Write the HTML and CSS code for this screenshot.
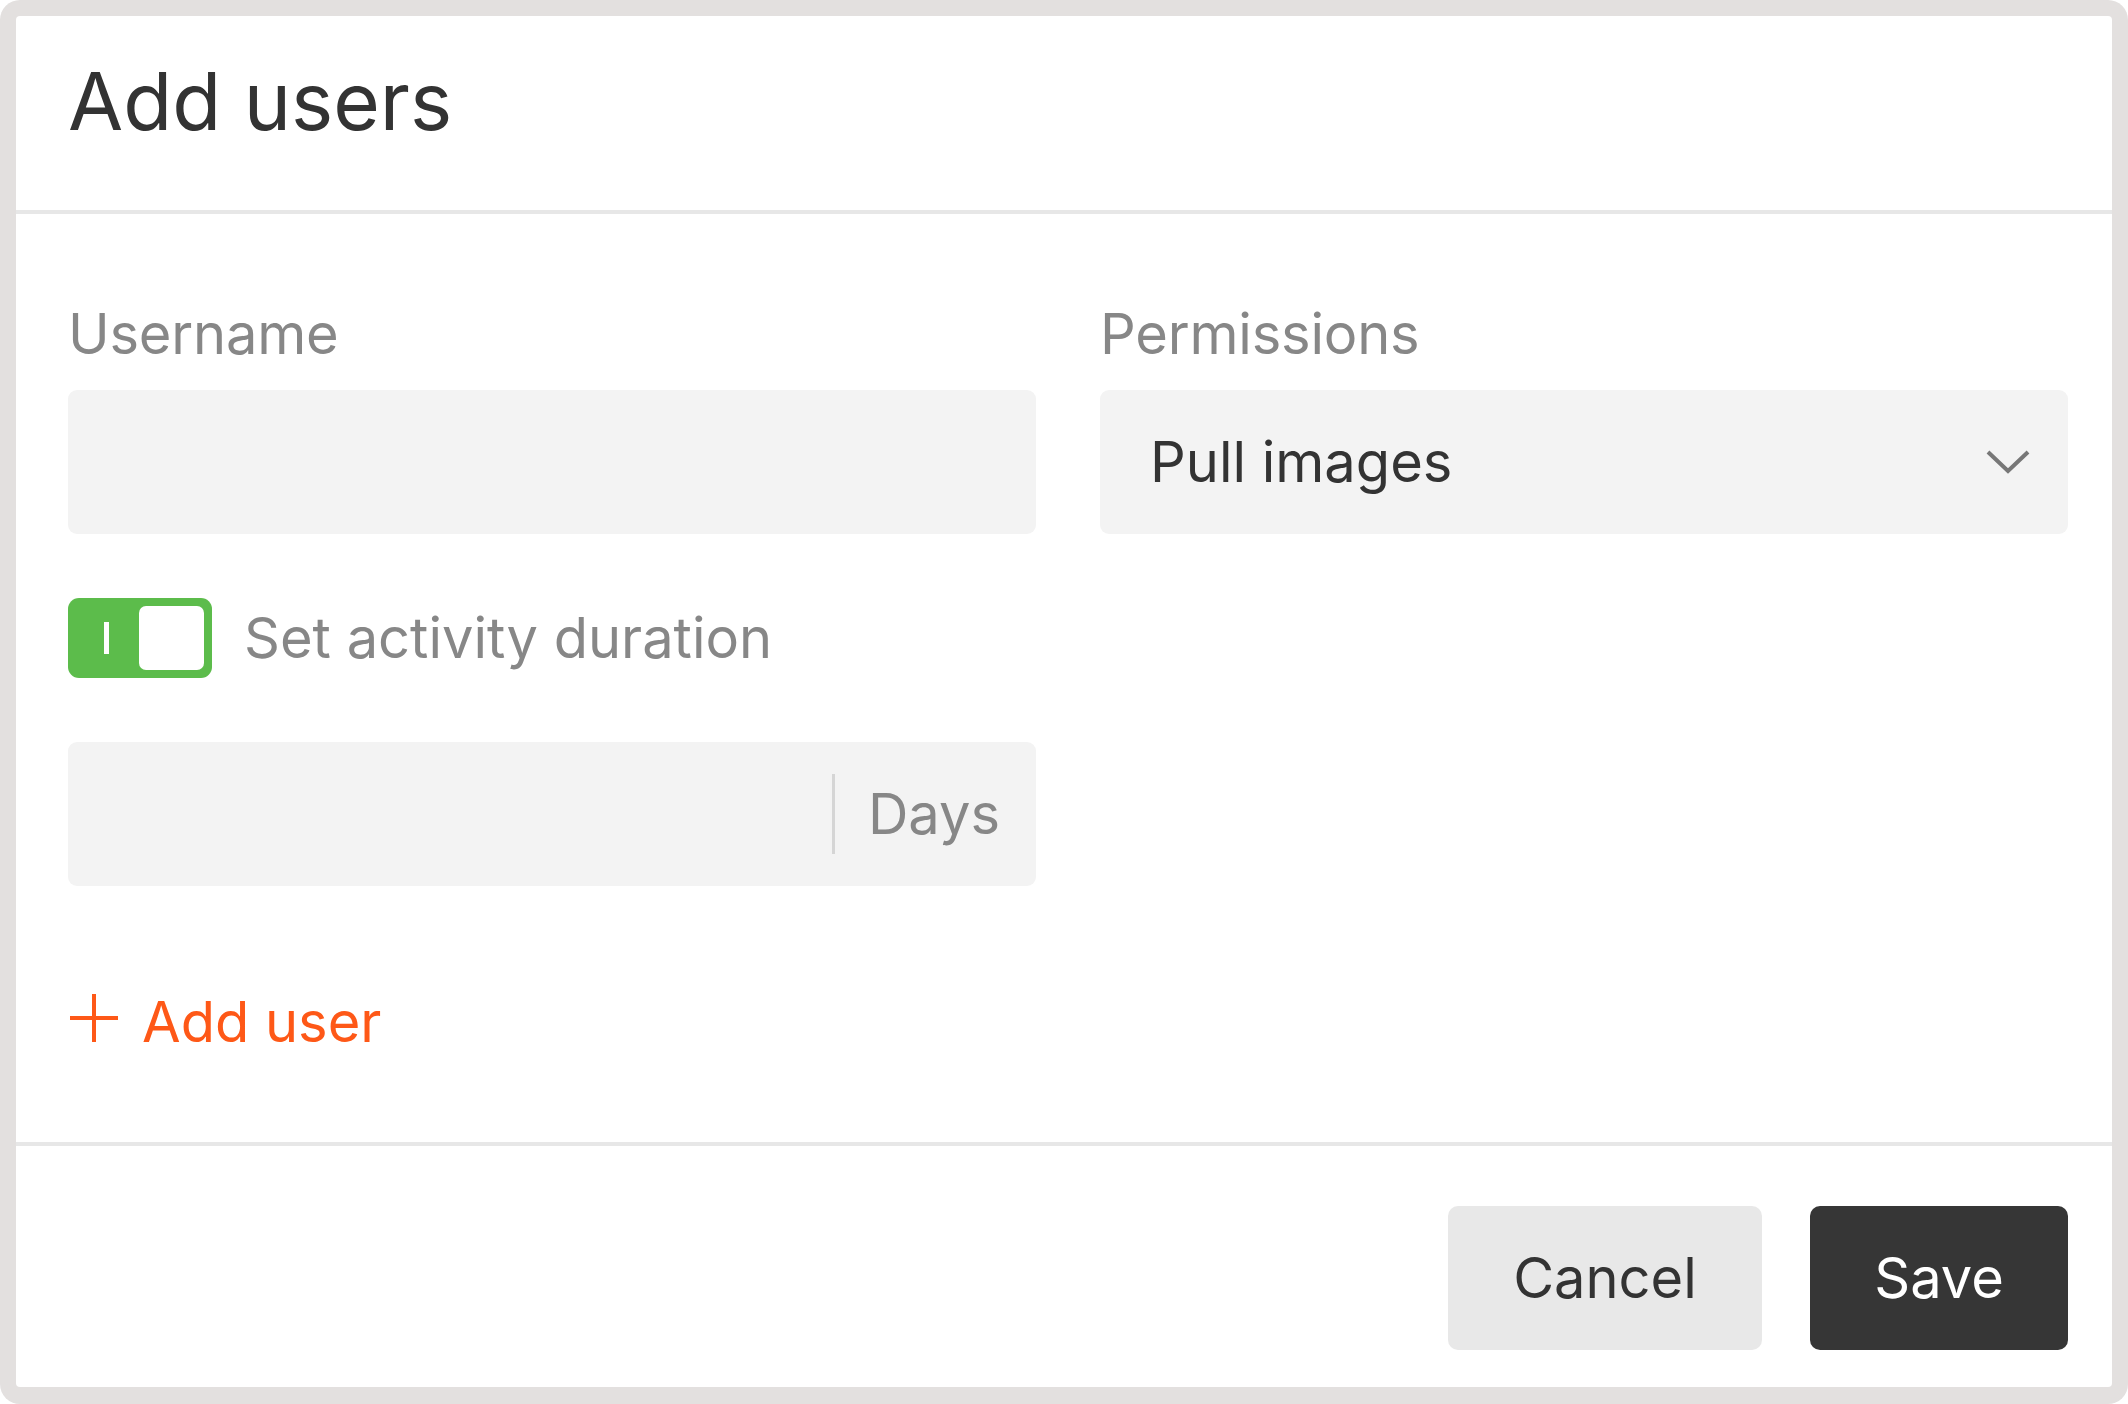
FILE: index.html
```html
<!DOCTYPE html>
<html lang="en">
<head>
<meta charset="utf-8">
<title>Add users</title>
<link rel="stylesheet" href="styles.css">
</head>
<body>
<div class="frame">
  <div class="modal">
    <header class="modal-header">
      <h1 class="title">Add users</h1>
    </header>
    <div class="modal-body">
      <div class="grid">
        <div class="field">
          <label class="label">Username</label>
          <div class="input"></div>
        </div>
        <div class="field">
          <label class="label">Permissions</label>
          <div class="input select">
            <span class="select-value">Pull images</span>
            <svg class="chevron" width="44" height="24" viewBox="0 0 44 24"><polyline points="2,2 22,21 42,2" fill="none" stroke="#777" stroke-width="4"/></svg>
          </div>
        </div>
      </div>
      <div class="toggle-row">
        <span class="toggle"><span class="toggle-mark"></span><span class="knob"></span></span>
        <span class="toggle-label">Set activity duration</span>
      </div>
      <div class="grid">
        <div class="input days">
          <span class="sep"></span>
          <span class="unit">Days</span>
        </div>
      </div>
      <button class="add-user">
        <svg class="plus" width="48" height="48" viewBox="0 0 48 48"><path d="M24 0V48M0 24H48" stroke="#fe5817" stroke-width="4" fill="none"/></svg>
        <span>Add user</span>
      </button>
    </div>
    <footer class="modal-footer">
      <button class="btn btn-secondary">Cancel</button>
      <button class="btn btn-primary">Save</button>
    </footer>
  </div>
</div>
</body>
</html>
```

FILE: styles.css
```css
* { box-sizing: border-box; }
html, body {
  margin: 0;
  padding: 0;
  background: #ffffff;
}
body {
  font-family: Inter, "Noto Sans", "Liberation Sans", sans-serif;
  color: #333333;
}
.frame {
  width: 2128px;
  height: 1404px;
  background: #e3e0df;
  border-radius: 20px;
  padding: 16px 16px 17px 16px;
}
.modal {
  background: #ffffff;
  border-radius: 4px;
  height: 100%;
  display: flex;
  flex-direction: column;
}
.modal-header {
  padding: 37px 52px 61px;
  border-bottom: 4px solid #e7e7e7;
}
.title {
  margin: 0;
  font-size: 80px;
  line-height: 96px;
  font-weight: 400;
  color: #333333;
}
.modal-body {
  padding: 86px 44px 86px 52px;
  border-bottom: 4px solid #e7e7e7;
}
.grid {
  display: grid;
  grid-template-columns: 1fr 1fr;
  column-gap: 64px;
}
.field {
  display: flex;
  flex-direction: column;
}
.label {
  font-size: 56px;
  line-height: 68px;
  color: #878787;
  margin-bottom: 22px;
  letter-spacing: -0.2px;
}
.input {
  height: 144px;
  background: #f3f3f3;
  border-radius: 9px;
}
.select {
  display: flex;
  align-items: center;
  justify-content: space-between;
  padding: 0 38px 0 50px;
}
.select-value {
  font-size: 56px;
  line-height: 68px;
  color: #333333;
}
.chevron { display: block; }
.toggle-row {
  display: flex;
  align-items: center;
  margin-top: 64px;
  margin-bottom: 64px;
}
.toggle {
  width: 144px;
  height: 80px;
  background: #5cbc4b;
  border-radius: 11px;
  display: flex;
  align-items: center;
  padding: 0 8px 0 36px;
}
.toggle-mark {
  width: 5px;
  height: 32px;
  background: #ffffff;
  margin-right: auto;
}
.knob {
  width: 65px;
  height: 64px;
  background: #ffffff;
  border-radius: 7px;
}
.toggle-label {
  margin-left: 32px;
  font-size: 56px;
  line-height: 68px;
  color: #878787;
}
.days {
  display: flex;
  align-items: center;
  justify-content: flex-end;
  padding-right: 36px;
}
.sep {
  width: 3px;
  height: 80px;
  background: #d5d5d5;
  margin-right: 33px;
}
.unit {
  font-size: 56px;
  line-height: 68px;
  color: #878787;
}
.add-user {
  display: flex;
  align-items: center;
  margin-top: 102px;
  padding: 0;
  border: 0;
  background: none;
  font-family: inherit;
  font-size: 56px;
  line-height: 68px;
  color: #fe5817;
  cursor: pointer;
}
.plus {
  display: block;
  margin-left: 2px;
  margin-right: 24px;
  margin-bottom: 8px;
}
.modal-footer {
  display: flex;
  justify-content: flex-end;
  gap: 48px;
  padding: 60px 44px 37px 52px;
}
.btn {
  height: 144px;
  border: 0;
  border-radius: 10px;
  padding: 0 64px;
  font-family: inherit;
  font-size: 56px;
  line-height: 68px;
  cursor: pointer;
}
.btn-secondary {
  background: #e8e8e8;
  color: #333333;
  min-width: 314px;
}
.btn-primary {
  background: #363636;
  color: #ffffff;
  min-width: 258px;
}
```
